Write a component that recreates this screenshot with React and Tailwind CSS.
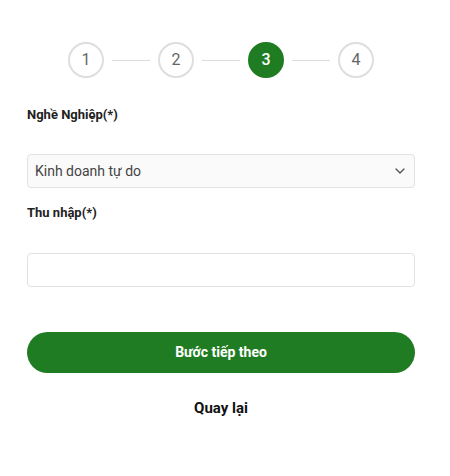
import React from "react";

function Step({ n, active }) {
  return (
    <div
      className={
        active
          ? "w-9 h-9 rounded-full bg-[#207c22] border-2 border-[#207c22] flex items-center justify-center text-white text-[16px] font-medium"
          : "w-9 h-9 rounded-full bg-white border-2 border-[#dedede] flex items-center justify-center text-[#666] text-[16px]"
      }
    >
      {n}
    </div>
  );
}

function Line() {
  return <div className="w-[38px] h-px bg-[#dcdcdc] mx-2" />;
}

export default function App() {
  return (
    <div
      className="w-[450px] h-[476px] bg-white pt-[42px]"
      style={{ fontFamily: "Roboto, 'Noto Sans', sans-serif" }}
    >
      <div className="flex items-center justify-center ml-[-8px]">
        <Step n={1} />
        <Line />
        <Step n={2} />
        <Line />
        <Step n={3} active />
        <Line />
        <Step n={4} />
      </div>

      <div className="pl-[27px] pr-[35px]">
        <div className="mt-[27px] text-[13px] leading-[20px] font-bold text-[#222]">
          Nghề Nghiệp(*)
        </div>
        <div className="mt-[29px] h-[34px] rounded-[4px] border border-[#e2e2e2] bg-[#fafafa] flex items-center justify-between pl-[7px] pr-[9px]">
          <span className="text-[14px] text-[#444]">Kinh doanh tự do</span>
          <svg width="10" height="6" viewBox="0 0 10 6" fill="none">
            <path d="M1 1l4 4 4-4" stroke="#555" strokeWidth="1.4" strokeLinecap="round" strokeLinejoin="round" />
          </svg>
        </div>

        <div className="mt-[15px] text-[13px] leading-[20px] font-bold text-[#222]">
          Thu nhập(*)
        </div>
        <div className="mt-[30px] h-[34px] rounded-[4px] border border-[#e2e2e2] bg-white" />

        <div className="mt-[45px] h-[41px] rounded-full bg-[#207c22] flex items-center justify-center text-white text-[14px] font-bold">
          Bước tiếp theo
        </div>

        <div className="mt-[25px] text-center text-[15px] leading-[20px] font-bold text-[#111]">
          Quay lại
        </div>
      </div>
    </div>
  );
}
